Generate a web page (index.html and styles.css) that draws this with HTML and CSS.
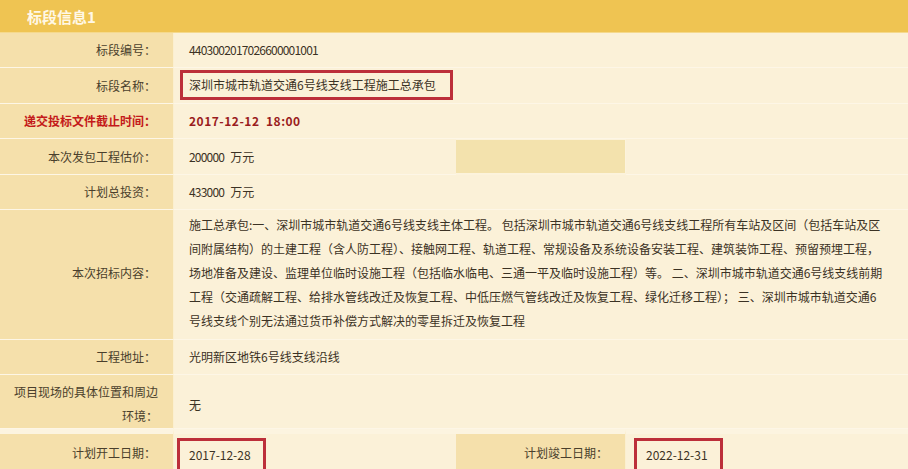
FILE: index.html
```html
<!DOCTYPE html>
<html>
<head>
  <meta charset="utf-8">
  <title>标段信息</title>
  <link rel="stylesheet" href="styles.css">
</head>
<body>
  <div class="panel">
    <div class="panel-title">标段信息1</div>
    <table class="info">
      <colgroup>
        <col class="col-label">
        <col class="col-value">
        <col class="col-label2">
        <col class="col-value2">
      </colgroup>
      <tr>
        <th>标段编号：</th>
        <td colspan="3"><span class="num">4403002017026600001001</span></td>
      </tr>
      <tr class="tall">
        <th>标段名称：</th>
        <td colspan="3" class="boxed"><span class="mark mark-name">深圳市城市轨道交通6号线支线工程施工总承包</span></td>
      </tr>
      <tr>
        <th class="warn">递交投标文件截止时间：</th>
        <td colspan="3" class="deadline">2017-12-12&nbsp; 18:00</td>
      </tr>
      <tr class="tall">
        <th>本次发包工程估价：</th>
        <td><span class="num amount">200000</span>万元</td>
        <th class="blank"></th>
        <td></td>
      </tr>
      <tr>
        <th>计划总投资：</th>
        <td colspan="3"><span class="num amount">433000</span>万元</td>
      </tr>
      <tr class="r-content">
        <th>本次招标内容：</th>
        <td colspan="3" class="long">施工总承包:一、深圳市城市轨道交通6号线支线主体工程。 包括深圳市城市轨道交通6号线支线工程所有车站及区间（包括车站及区<br>间附属结构）的土建工程（含人防工程）、接触网工程、轨道工程、常规设备及系统设备安装工程、建筑装饰工程、预留预埋工程，<br>场地准备及建设、监理单位临时设施工程（包括临水临电、三通一平及临时设施工程）等。 二、深圳市城市轨道交通6号线支线前期<br>工程（交通疏解工程、给排水管线改迁及恢复工程、中低压燃气管线改迁及恢复工程、绿化迁移工程）； 三、深圳市城市轨道交通6<br>号线支线个别无法通过货币补偿方式解决的零星拆迁及恢复工程</td>
      </tr>
      <tr>
        <th>工程地址：</th>
        <td colspan="3">光明新区地铁6号线支线沿线</td>
      </tr>
      <tr class="r-site">
        <th class="wrap">项目现场的具体位置和周边<br>环境：</th>
        <td colspan="3">无</td>
      </tr>
      <tr class="r-dates">
        <th>计划开工日期：</th>
        <td><span class="mark mark-date">2017-12-28</span></td>
        <th>计划竣工日期：</th>
        <td class="date2"><span class="mark mark-date">2022-12-31</span></td>
      </tr>
    </table>
  </div>
</body>
</html>
```

FILE: styles.css
```css
html, body {
  margin: 0;
  padding: 0;
  background: #fbf1d8;
  font-family: "Noto Sans CJK SC", "Noto Sans", sans-serif;
  font-size: 12px;
}
.panel {
  width: 908px;
  height: 469px;
  overflow: hidden;
}
.panel-title {
  height: 33px;
  line-height: 33px;
  padding-left: 27px;
  background: #efc452;
  border-bottom: 1px solid #f5d98c;
  box-sizing: border-box;
  color: #fff8e6;
  font-size: 15px;
  font-weight: bold;
}
.info {
  width: 908px;
  table-layout: fixed;
  border-collapse: separate;
  border-spacing: 0;
}
.col-label { width: 174px; }
.col-value { width: 282px; }
.col-label2 { width: 170px; }
.info th, .info td {
  padding: 5px 0;
  border-bottom: 1px solid #fdf6e6;
  line-height: 24px;
  white-space: nowrap;
}
.info th {
  background: #f5e0ab;
  border-right: 1px solid #fbefcf;
  text-align: right;
  padding-right: 17px;
  font-weight: normal;
  color: #4a3f2c;
}
.info td {
  background: #fbf1d8;
  padding-left: 15px;
  color: #3b3224;
}
.num {
  letter-spacing: -0.8px;
}
.amount {
  margin-right: 6px;
}
.info th.warn {
  color: #c41a1a;
  font-weight: bold;
}
.info td.deadline {
  font-weight: bold;
  letter-spacing: 0.5px;
  color: #9a1c20;
}
.tall th, .tall td {
  padding-top: 6px;
}
.info td.boxed {
  padding-top: 2px;
  padding-bottom: 3px;
}
.info th.blank {
  background: #f3e2ad;
  border: 1px solid #fcf3dc;
  border-width: 1px 1px 2px 0;
}
.r-content th {
  padding-top: 3px;
  padding-bottom: 6px;
}
.info td.long {
  padding-top: 3px;
  padding-bottom: 6px;
}
.r-site th {
  padding-top: 5px;
  padding-bottom: 0;
  padding-right: 15px;
}
.r-site td {
  padding-top: 6px;
  padding-bottom: 0;
}
.r-dates th, .r-dates td {
  border-top: 5px solid #fcf4e0;
  border-bottom: 0;
  vertical-align: top;
}
.r-dates th {
  padding-top: 7px;
}
.r-dates td {
  padding-top: 4px;
}
.info td.date2 {
  padding-left: 20px;
}
.mark {
  display: inline-block;
  border: 3px solid #bc2f3a;
  box-sizing: border-box;
}
.mark-name {
  height: 30px;
  line-height: 24px;
  margin-left: -9px;
  padding: 0 14px 0 6px;
}
.mark-date {
  height: 34px;
  line-height: 28px;
  margin-left: -12px;
  padding: 0 12px 0 9px;
  color: #3b3224;
}
```
